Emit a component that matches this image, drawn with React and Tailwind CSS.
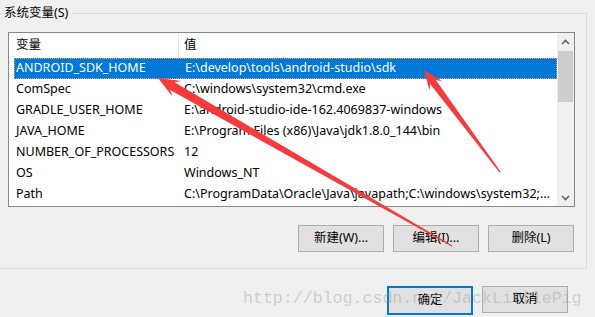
import React from 'react';

const rows = [
  ['ANDROID_SDK_HOME', 'E:\\develop\\tools\\android-studio\\sdk'],
  ['ComSpec', 'C:\\windows\\system32\\cmd.exe'],
  ['GRADLE_USER_HOME', 'E:\\android-studio-ide-162.4069837-windows'],
  ['JAVA_HOME', 'E:\\Program Files (x86)\\Java\\jdk1.8.0_144\\bin'],
  ['NUMBER_OF_PROCESSORS', '12'],
  ['OS', 'Windows_NT'],
  ['Path', 'C:\\ProgramData\\Oracle\\Java\\javapath;C:\\windows\\system32;...'],
];

// tapered red callout arrow, tip -> tail
function arrowPoints(tip, tail, headLen, headW, shaftW, tailW) {
  const dx = tail[0] - tip[0];
  const dy = tail[1] - tip[1];
  const len = Math.hypot(dx, dy);
  const ux = dx / len, uy = dy / len;
  const px = -uy, py = ux;
  const bx = tip[0] + ux * headLen, by = tip[1] + uy * headLen;
  const sx = tip[0] + ux * headLen * 0.75, sy = tip[1] + uy * headLen * 0.75;
  const pts = [
    [tip[0], tip[1]],
    [bx + px * headW, by + py * headW],
    [sx + px * shaftW, sy + py * shaftW],
    [tail[0] + px * tailW, tail[1] + py * tailW],
    [tail[0] - px * tailW, tail[1] - py * tailW],
    [sx - px * shaftW, sy - py * shaftW],
    [bx - px * headW, by - py * headW],
  ];
  return pts.map((p) => p[0].toFixed(1) + ',' + p[1].toFixed(1)).join(' ');
}

function Chevron({ down }) {
  return (
    <svg width="9" height="6" viewBox="0 0 9 6">
      <polyline
        points={down ? '1,1 4.5,4.5 8,1' : '1,5 4.5,1.5 8,5'}
        fill="none"
        stroke="#606060"
        strokeWidth="1.6"
      />
    </svg>
  );
}

function Button({ children, primary }) {
  return (
    <div
      className={
        'w-[86px] flex items-center justify-center bg-[#e1e1e1] text-[12.5px] text-black ' +
        (primary ? 'h-[29px] border-2 border-[#0078d7]' : 'h-[27px] border border-[#adadad]')
      }
    >
      {children}
    </div>
  );
}

export default function App() {
  return (
    <div className="relative w-[595px] h-[317px] overflow-hidden bg-[#f0f0f0] font-['Noto_Sans','Noto_Sans_CJK_SC',sans-serif] text-[12.5px] text-black">
      <fieldset className="ml-[-1px] mt-[5px] w-[588px] border border-[#dcdcdc] p-0 pb-[16px]">
        <legend className="ml-[4px] pr-[4px] leading-[16px] text-[12.5px]">系统变量(S)</legend>

        <div className="ml-[8px] mt-[11px] w-[567px] h-[175px] border border-[#828790] bg-white flex">
          <div className="flex-1 flex flex-col">
            <div className="h-[25px] ml-[5px] flex items-stretch">
              <div className="w-[164px] pl-[2px] flex items-center">变量</div>
              <div className="w-px bg-[#e5e5e5]" />
              <div className="flex-1 pl-[5px] flex items-center">值</div>
            </div>
            {rows.map(([name, value], i) => (
              <div
                key={name}
                className={
                  'ml-[5px] h-[21px] flex items-center whitespace-nowrap overflow-hidden ' +
                  (i === 0 ? 'bg-[#0078d7] text-white border border-dotted border-[#ffa040]' : '')
                }
              >
                <div className={'w-[168px] ' + (i === 0 ? 'pl-[1px]' : 'pl-[2px]')}>{name}</div>
                <div className="flex-1 pl-[2px] overflow-hidden">{value}</div>
              </div>
            ))}
          </div>
          <div className="w-[17px] bg-[#f0f0f0] flex flex-col items-center">
            <div className="h-[17px] w-full flex items-center justify-center">
              <Chevron />
            </div>
            <div className="mt-[1px] w-[15px] h-[51px] bg-[#cdcdcd]" />
            <div className="flex-1" />
            <div className="h-[17px] w-full flex items-center justify-center">
              <Chevron down />
            </div>
          </div>
        </div>

        <div className="mt-[18px] ml-[298px] flex gap-[9px]">
          <Button>新建(W)...</Button>
          <Button>编辑(I)...</Button>
          <Button>删除(L)</Button>
        </div>
      </fieldset>

      <div className="mt-[17px] ml-[387px] flex gap-[9px]">
        <Button primary>确定</Button>
        <Button>取消</Button>
      </div>

      <div className="absolute left-[243px] top-[288px] font-['Liberation_Mono',monospace] text-[16.6px] leading-[22px] text-[#969696]/40 whitespace-nowrap pointer-events-none">
        http://blog.csdn.net/JackLittlePig
      </div>

      <svg className="absolute left-0 top-0 pointer-events-none" width="595" height="317">
        <polygon points={arrowPoints([158, 78], [452, 246], 22, 9, 4.5, 0.6)} fill="#f53b3b" />
        <polygon points={arrowPoints([424, 70], [500, 172], 20, 8, 3.5, 0.6)} fill="#f53b3b" />
      </svg>
    </div>
  );
}
